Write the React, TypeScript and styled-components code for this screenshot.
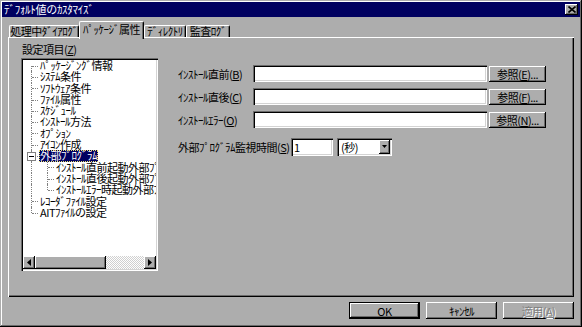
import styled, { createGlobalStyle } from "styled-components";

const face = "#adadad";
const shade = "#6b6b6b";
const navy = "#000060";

const GlobalStyle = createGlobalStyle`
  html, body { margin: 0; padding: 0; background: ${face}; }
  body {
    font-family: "Noto Sans CJK JP", "Noto Sans", sans-serif;
    font-size: 11px;
    letter-spacing: -0.5px;
    color: #000;
  }
  * { box-sizing: border-box; }
`;

const raised = `inset -1px -1px #000, inset 1px 1px #fff, inset -2px -2px ${shade}, inset 2px 2px ${face}`;
const sunken = `inset 1px 1px ${shade}, inset 2px 2px #000, inset -1px -1px #fff, inset -2px -2px #d4d4d4`;

const Window = styled.div`
  width: 582px;
  height: 327px;
  padding: 2px;
  background: ${face};
  box-shadow: inset -1px -1px #000, inset 1px 1px ${face}, inset -2px -2px ${shade},
    inset 2px 2px #fff;
  display: flex;
  flex-direction: column;
`;

const TitleBar = styled.div`
  height: 15px;
  background: ${navy};
  color: #fff;
  display: flex;
  align-items: center;
  justify-content: space-between;
  padding: 0 2px;
  letter-spacing: -0.3px;
  line-height: 15px;
`;

const CloseButton = styled.div`
  width: 13px;
  height: 11px;
  background: ${face};
  box-shadow: ${raised};
  display: flex;
  align-items: center;
  justify-content: center;
`;

const Body = styled.div`
  flex: 1;
  display: flex;
  flex-direction: column;
  padding: 4px 6px 0 6px;
`;

const TabRow = styled.div`
  display: flex;
  align-items: flex-end;
  height: 16px;
  padding-left: 1px;
`;

const Tab = styled.div<{ $active?: boolean; $w: number }>`
  width: ${(p) => p.$w}px;
  height: ${(p) => (p.$active ? 18 : 12)}px;
  margin-bottom: ${(p) => (p.$active ? -2 : 0)}px;
  padding-bottom: ${(p) => (p.$active ? 2 : 0)}px;
  position: relative;
  z-index: ${(p) => (p.$active ? 3 : 1)};
  display: flex;
  align-items: center;
  justify-content: center;
  white-space: nowrap;
  background: ${face};
  border-top: 1px solid #fff;
  border-left: 1px solid #fff;
  border-right: 1px solid #000;
  border-radius: 2px 2px 0 0;
  box-shadow: inset -1px 0 ${shade};
  line-height: 1;
`;

const Panel = styled.div`
  position: relative;
  z-index: 2;
  height: 260px;
  background: ${face};
  box-shadow: inset 1px 1px #fff, inset -1px -1px #000, inset -2px -2px ${shade};
  display: flex;
  padding: 6px 0 0 13px;
`;

const LeftColumn = styled.div`
  width: 137px;
  display: flex;
  flex-direction: column;
`;

const Caption = styled.div`
  height: 12px;
  line-height: 12px;
  padding-left: 1px;
  margin-bottom: 3px;
  white-space: nowrap;
`;

const TreeBox = styled.div`
  height: 213px;
  background: #fff;
  box-shadow: ${sunken};
  padding: 2px;
  display: flex;
  flex-direction: column;
`;

const TreeList = styled.div`
  flex: 1;
  overflow: hidden;
`;

const Row = styled.div`
  display: flex;
  height: 11.3px;
  line-height: 11.3px;
  white-space: nowrap;
`;

type BranchKind = "first" | "tee" | "last" | "pass";

const Branch = styled.span<{ $kind: BranchKind }>`
  position: relative;
  width: 16px;
  flex: none;
  &::before {
    content: "";
    position: absolute;
    left: 8px;
    top: ${(p) => (p.$kind === "first" ? "50%" : "0")};
    bottom: ${(p) => (p.$kind === "last" ? "50%" : "0")};
    border-left: 1px dotted #808080;
  }
  &::after {
    content: "";
    display: ${(p) => (p.$kind === "pass" ? "none" : "block")};
    position: absolute;
    left: 9px;
    width: 6px;
    top: 50%;
    border-top: 1px dotted #808080;
  }
`;

const Expander = styled.span`
  position: absolute;
  z-index: 1;
  left: 4px;
  top: calc(50% - 4px);
  width: 9px;
  height: 9px;
  background: #fff;
  border: 1px solid #808080;
  &::before {
    content: "";
    position: absolute;
    left: 1px;
    right: 1px;
    top: 3px;
    border-top: 1px solid #000;
  }
`;

const Label = styled.span<{ $selected?: boolean }>`
  padding: 0 1px;
  background: ${(p) => (p.$selected ? navy : "transparent")};
  color: ${(p) => (p.$selected ? "#fff" : "#000")};
  outline: ${(p) => (p.$selected ? "1px dotted #e8e070" : "none")};
  outline-offset: -1px;
`;

const ScrollBar = styled.div`
  height: 13px;
  display: flex;
  flex: none;
`;

const ScrollArrow = styled.div`
  width: 12px;
  background: ${face};
  box-shadow: ${raised};
  display: flex;
  align-items: center;
  justify-content: center;
`;

const ScrollThumb = styled.div`
  width: 71px;
  background: ${face};
  box-shadow: ${raised};
`;

const ScrollTrack = styled.div`
  flex: 1;
  background: repeating-conic-gradient(#fff 0 25%, #d0d0d0 0 50%) 0 0 / 2px 2px;
`;

const Form = styled.div`
  margin: 22px 0 0 20px;
  display: flex;
  flex-direction: column;
  gap: 6px;
`;

const FieldRow = styled.div<{ $gapTop?: number }>`
  display: flex;
  align-items: center;
  height: 17px;
  margin-top: ${(p) => p.$gapTop ?? 0}px;
`;

const FieldLabel = styled.label<{ $w: number }>`
  width: ${(p) => p.$w}px;
  white-space: nowrap;
  flex: none;
`;

const TextField = styled.div<{ $w: number; $h?: number }>`
  width: ${(p) => p.$w}px;
  height: ${(p) => p.$h ?? 17}px;
  background: #fff;
  box-shadow: ${sunken};
  padding: 0 3px;
  line-height: ${(p) => p.$h ?? 17}px;
  flex: none;
`;

const Button = styled.div<{ $w: number; $h?: number; $default?: boolean; $disabled?: boolean }>`
  width: ${(p) => p.$w}px;
  height: ${(p) => p.$h ?? 16}px;
  background: ${face};
  box-shadow: ${(p) =>
    p.$default
      ? `inset 0 0 0 1px #000, inset -2px -2px #000, inset 2px 2px #fff, inset -3px -3px ${shade}`
      : raised};
  display: flex;
  align-items: center;
  justify-content: center;
  white-space: nowrap;
  flex: none;
  color: ${(p) => (p.$disabled ? "#808080" : "#000")};
  text-shadow: ${(p) => (p.$disabled ? "1px 1px #fff" : "none")};
`;

const BrowseButton = styled(Button)`
  margin-left: 2px;
`;

const Select = styled.div`
  width: 55px;
  height: 18px;
  margin-left: 4px;
  background: #fff;
  box-shadow: ${sunken};
  padding: 2px 2px 2px 4px;
  display: flex;
  align-items: center;
  justify-content: space-between;
`;

const DropButton = styled.div`
  width: 11px;
  height: 14px;
  background: ${face};
  box-shadow: ${raised};
  display: flex;
  align-items: center;
  justify-content: center;
`;

const Footer = styled.div`
  display: flex;
  justify-content: flex-end;
  gap: 6px;
  margin-top: 5px;
`;

const Mn = styled.u`
  text-decoration: underline;
`;

const CloseIcon = () => (
  <svg width="8" height="7" viewBox="0 0 8 7">
    <path d="M0.5 0.5 L7.5 6.5 M7.5 0.5 L0.5 6.5" stroke="#000" strokeWidth="1.6" />
  </svg>
);

const Arrow = ({ dir }: { dir: "left" | "right" | "down" }) => {
  if (dir === "down")
    return (
      <svg width="5" height="3" viewBox="0 0 5 3">
        <polygon points="0,0 5,0 2.5,3" fill="#000" />
      </svg>
    );
  return (
    <svg width="4" height="7" viewBox="0 0 4 7">
      <polygon points={dir === "left" ? "4,0 4,7 0,3.5" : "0,0 0,7 4,3.5"} fill="#000" />
    </svg>
  );
};

type TreeItem = {
  label: string;
  branches: BranchKind[];
  expander?: boolean;
  selected?: boolean;
};

const treeItems: TreeItem[] = [
  { label: "ﾊﾟｯｹｰｼﾞﾝｸﾞ情報", branches: ["first"] },
  { label: "ｼｽﾃﾑ条件", branches: ["tee"] },
  { label: "ｿﾌﾄｳｪｱ条件", branches: ["tee"] },
  { label: "ﾌｧｲﾙ属性", branches: ["tee"] },
  { label: "ｽｹｼﾞｭｰﾙ", branches: ["tee"] },
  { label: "ｲﾝｽﾄｰﾙ方法", branches: ["tee"] },
  { label: "ｵﾌﾟｼｮﾝ", branches: ["tee"] },
  { label: "ｱｲｺﾝ作成", branches: ["tee"] },
  { label: "外部ﾌﾟﾛｸﾞﾗﾑ", branches: ["tee"], expander: true, selected: true },
  { label: "ｲﾝｽﾄｰﾙ直前起動外部ﾌﾟﾛｸﾞﾗﾑ", branches: ["pass", "tee"] },
  { label: "ｲﾝｽﾄｰﾙ直後起動外部ﾌﾟﾛｸﾞﾗﾑ", branches: ["pass", "tee"] },
  { label: "ｲﾝｽﾄｰﾙｴﾗｰ時起動外部ﾌﾟﾛｸﾞﾗﾑ", branches: ["pass", "last"] },
  { label: "ﾚｺｰﾀﾞﾌｧｲﾙ設定", branches: ["tee"] },
  { label: "AITﾌｧｲﾙの設定", branches: ["last"] },
];

const browseRows = [
  { label: "ｲﾝｽﾄｰﾙ直前", key: "B", btn: "E" },
  { label: "ｲﾝｽﾄｰﾙ直後", key: "C", btn: "F" },
  { label: "ｲﾝｽﾄｰﾙｴﾗｰ", key: "O", btn: "N" },
];

const App = () => {
  return (
    <>
      <GlobalStyle />
      <Window>
        <TitleBar>
          <span>ﾃﾞﾌｫﾙﾄ値のｶｽﾀﾏｲｽﾞ</span>
          <CloseButton>
            <CloseIcon />
          </CloseButton>
        </TitleBar>
        <Body>
          <TabRow>
            <Tab $w={70}>処理中ﾀﾞｲｱﾛｸﾞ</Tab>
            <Tab $w={65} $active>
              ﾊﾟｯｹｰｼﾞ属性
            </Tab>
            <Tab $w={42}>ﾃﾞｨﾚｸﾄﾘ</Tab>
            <Tab $w={44}>監査ﾛｸﾞ</Tab>
          </TabRow>
          <Panel>
            <LeftColumn>
              <Caption>
                設定項目(<Mn>Z</Mn>)
              </Caption>
              <TreeBox>
                <TreeList>
                  {treeItems.map((item) => (
                    <Row key={item.label}>
                      {item.branches.map((kind, i) => (
                        <Branch key={i} $kind={kind}>
                          {item.expander && i === item.branches.length - 1 && <Expander />}
                        </Branch>
                      ))}
                      <Label $selected={item.selected}>{item.label}</Label>
                    </Row>
                  ))}
                </TreeList>
                <ScrollBar>
                  <ScrollArrow>
                    <Arrow dir="left" />
                  </ScrollArrow>
                  <ScrollThumb />
                  <ScrollTrack />
                  <ScrollArrow>
                    <Arrow dir="right" />
                  </ScrollArrow>
                </ScrollBar>
              </TreeBox>
            </LeftColumn>
            <Form>
              {browseRows.map((r) => (
                <FieldRow key={r.key}>
                  <FieldLabel $w={75}>
                    {r.label}(<Mn>{r.key}</Mn>)
                  </FieldLabel>
                  <TextField $w={234} />
                  <BrowseButton $w={57}>
                    参照(<Mn>{r.btn}</Mn>)...
                  </BrowseButton>
                </FieldRow>
              ))}
              <FieldRow $gapTop={4}>
                <FieldLabel $w={113}>
                  外部ﾌﾟﾛｸﾞﾗﾑ監視時間(<Mn>S</Mn>)
                </FieldLabel>
                <TextField $w={42} $h={18}>
                  1
                </TextField>
                <Select>
                  <span>(秒)</span>
                  <DropButton>
                    <Arrow dir="down" />
                  </DropButton>
                </Select>
              </FieldRow>
            </Form>
          </Panel>
          <Footer>
            <Button $w={71} $h={17} $default>
              OK
            </Button>
            <Button $w={71} $h={17}>
              ｷｬﾝｾﾙ
            </Button>
            <Button $w={71} $h={17} $disabled>
              適用(<Mn>A</Mn>)
            </Button>
          </Footer>
        </Body>
      </Window>
    </>
  );
};

export default App;
